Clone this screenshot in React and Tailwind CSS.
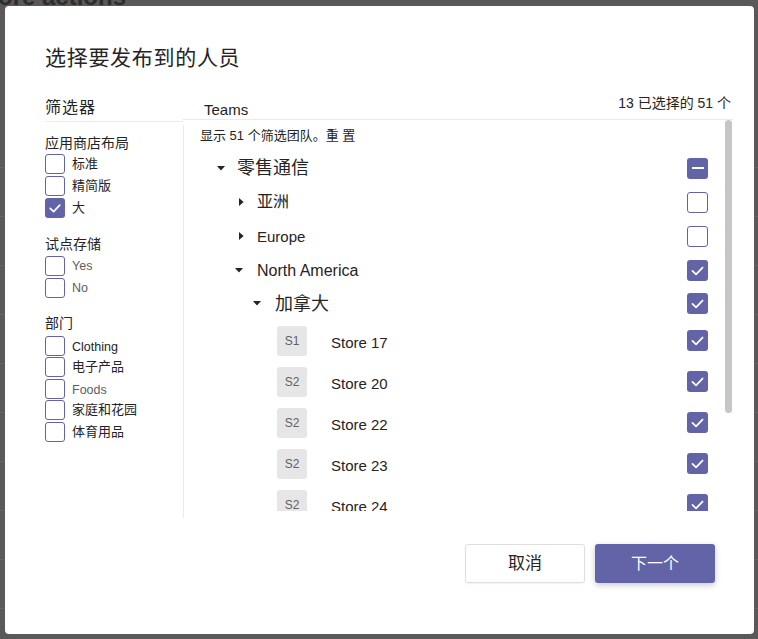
import React from "react";

const FONT = { fontFamily: '"Liberation Sans", "Noto Sans CJK SC", sans-serif' };

function Check({ size = 20 }) {
  return (
    <svg width={size} height={size} viewBox="0 0 20 20" className="block">
      <path d="M5.2 10.4 L8.6 13.6 L14.8 7.2" fill="none" stroke="white" strokeWidth="1.7" strokeLinecap="round" strokeLinejoin="round" />
    </svg>
  );
}

function LeftBox({ checked }) {
  return checked ? (
    <div className="w-[20px] h-[20px] rounded-[3px] bg-[#6264a7] shrink-0 flex items-center justify-center">
      <Check size={20} />
    </div>
  ) : (
    <div className="w-[20px] h-[20px] rounded-[3px] border border-[#6264a7] bg-white shrink-0" />
  );
}

function RightBox({ state }) {
  if (state === "checked")
    return (
      <div className="ml-auto w-[21px] h-[21px] rounded-[3px] bg-[#6264a7] shrink-0 flex items-center justify-center">
        <Check size={21} />
      </div>
    );
  if (state === "mixed")
    return (
      <div className="ml-auto w-[21px] h-[21px] rounded-[3px] bg-[#6264a7] shrink-0 flex items-center justify-center">
        <div className="w-[12px] h-[2px] bg-white" />
      </div>
    );
  return <div className="ml-auto w-[21px] h-[21px] rounded-[3px] border border-[#6264a7] bg-white shrink-0" />;
}

function CaretDown({ cls }) {
  return (
    <svg width="8" height="5" viewBox="0 0 8 5" className={"block shrink-0 " + cls}>
      <polygon points="0,0 8,0 4,4.6" fill="#252423" />
    </svg>
  );
}
function CaretRight({ cls }) {
  return (
    <svg width="5" height="8" viewBox="0 0 5 8" className={"block shrink-0 " + cls}>
      <polygon points="0,0 4.6,4 0,8" fill="#252423" />
    </svg>
  );
}

function FilterRow({ label, checked, cls = "h-[22px]", textCls = "text-[13px] text-[#252423]" }) {
  return (
    <div className={"flex items-center gap-[7px] " + cls}>
      <LeftBox checked={checked} />
      <span className={"leading-[16px] " + textCls}>{label}</span>
    </div>
  );
}

function StoreRow({ badge, name }) {
  return (
    <div className="flex items-center h-[41px]">
      <div className="ml-[77px] w-[30px] h-[30px] rounded-[3px] bg-[#e6e6e6] flex items-center justify-center text-[12px] text-[#616161] leading-none">
        {badge}
      </div>
      <span className="ml-[24px] mt-[4px] text-[15px] leading-[18px] text-[#252423]">{name}</span>
      <RightBox state="checked" />
    </div>
  );
}

export default function App() {
  const bgRows = Array.from({ length: 10 });
  return (
    <div className="relative w-[758px] h-[639px] overflow-hidden bg-[#5a5858]" style={FONT}>
      {/* background page */}
      <div className="-mt-[15px] -ml-[22px] text-[24px] leading-[24px] font-bold text-[#2e2d2d] whitespace-nowrap">
        More actions
      </div>
      <div className="mt-[110px]">
        {bgRows.map((_, i) => (
          <div key={i} className="h-[49px] border-b border-[#666464]" />
        ))}
      </div>

      {/* dialog */}
      <div className="absolute left-[5px] top-[6px] w-[749px] h-[628px] bg-white rounded-[4px] flex flex-col">
        <div className="pl-[40px] pt-[38px] text-[21px] leading-[28px] tracking-[0.7px] text-[#252423]">
          选择要发布到的人员
        </div>

        <div className="flex pl-[40px] mt-[23px]">
          {/* left filters */}
          <div className="w-[138px]">
            <div className="h-[25px] border-b border-[#edebe9]">
              <div className="mt-[2px] text-[16px] leading-[22px] tracking-[1px] text-[#252423]">筛选器</div>
            </div>
            <div className="mt-[12px] text-[14px] leading-[18px] text-[#252423]">应用商店布局</div>
            <div className="mt-[1px]">
              <FilterRow label="标准" />
              <FilterRow label="精简版" />
              <FilterRow label="大" checked />
            </div>
            <div className="mt-[16px] text-[14px] leading-[18px] text-[#252423]">试点存储</div>
            <div className="mt-[2px]">
              <FilterRow label="Yes" textCls="text-[12.5px] text-[#605e5c]" />
              <FilterRow label="No" textCls="text-[12.5px] text-[#605e5c]" />
            </div>
            <div className="mt-[15px] text-[14px] leading-[18px] text-[#252423]">部门</div>
            <div className="mt-[3px]">
              <FilterRow label="Clothing" cls="h-[21.5px]" textCls="text-[12.5px] text-[#252423] mt-[3px]" />
              <FilterRow label="电子产品" cls="h-[21.5px]" />
              <FilterRow label="Foods" cls="h-[21.5px]" textCls="text-[12.5px] text-[#605e5c] mt-[2px]" />
              <FilterRow label="家庭和花园" cls="h-[21.5px]" />
              <FilterRow label="体育用品" cls="h-[21.5px]" />
            </div>
          </div>

          {/* right teams */}
          <div className="w-[550px]">
            <div className="h-[25px] border-b border-[#edebe9] flex justify-between">
              <div className="ml-[21px] mt-[5px] text-[15px] leading-[20px] text-[#252423]">Teams</div>
              <div className="-mt-[2px] mr-[2px] text-[14px] leading-[20px] text-[#252423] whitespace-nowrap">13 已选择的 51 个</div>
            </div>
            <div className="flex items-start">
              <div className="flex-1 mt-[5px] h-[393px] border-l border-[#edebe9]">
                <div className="h-[386px] overflow-hidden pl-[16px] pr-[17px]">
                  <div className="mt-[2px] text-[13px] leading-[18px] text-[#252423] whitespace-nowrap">显示 51 个筛选团队。重 置</div>
                  <div className="mt-[6px] -ml-[16px]">
                    <div className="flex items-center h-[34px] pl-[16px]">
                      <CaretDown cls="ml-[17px]" />
                      <span className="ml-[12px] text-[18px] leading-[24px] text-[#252423]">零售通信</span>
                      <RightBox state="mixed" />
                    </div>
                    <div className="flex items-center h-[34px] pl-[16px]">
                      <CaretRight cls="ml-[39px]" />
                      <span className="ml-[13px] text-[16px] leading-[22px] text-[#252423]">亚洲</span>
                      <RightBox state="empty" />
                    </div>
                    <div className="flex items-center h-[34px] pl-[16px]">
                      <CaretRight cls="ml-[39px]" />
                      <span className="ml-[13px] mt-[2px] text-[15px] leading-[20px] text-[#252423]">Europe</span>
                      <RightBox state="empty" />
                    </div>
                    <div className="flex items-center h-[34px] pl-[16px]">
                      <CaretDown cls="ml-[35px]" />
                      <span className="ml-[14px] mt-[2px] text-[16px] leading-[20px] text-[#252423]">North America</span>
                      <RightBox state="checked" />
                    </div>
                    <div className="flex items-center h-[33px] pl-[16px]">
                      <CaretDown cls="ml-[53px]" />
                      <span className="ml-[14px] text-[18px] leading-[24px] text-[#252423]">加拿大</span>
                      <RightBox state="checked" />
                    </div>
                    <div className="pl-[16px]">
                      <StoreRow badge="S1" name="Store 17" />
                      <StoreRow badge="S2" name="Store 20" />
                      <StoreRow badge="S2" name="Store 22" />
                      <StoreRow badge="S2" name="Store 23" />
                      <StoreRow badge="S2" name="Store 24" />
                    </div>
                  </div>
                </div>
              </div>
              <div className="w-[7px] h-[293px] rounded-full bg-[#c8c6c4] mr-[1px]" />
            </div>
          </div>
        </div>

        <div className="mt-auto mb-[51px] flex justify-end gap-[10px] pr-[39px]">
          <button className="w-[120px] h-[39px] rounded-[3px] border border-[#e1dfdd] bg-white text-[17px] text-[#252423] shadow-[0_1px_2px_rgba(0,0,0,0.06)]">
            取消
          </button>
          <button className="w-[120px] h-[39px] rounded-[3px] bg-[#6264a7] text-[16px] text-white shadow-[0_2px_6px_rgba(0,0,0,0.22)]">
            下一个
          </button>
        </div>
      </div>
    </div>
  );
}
